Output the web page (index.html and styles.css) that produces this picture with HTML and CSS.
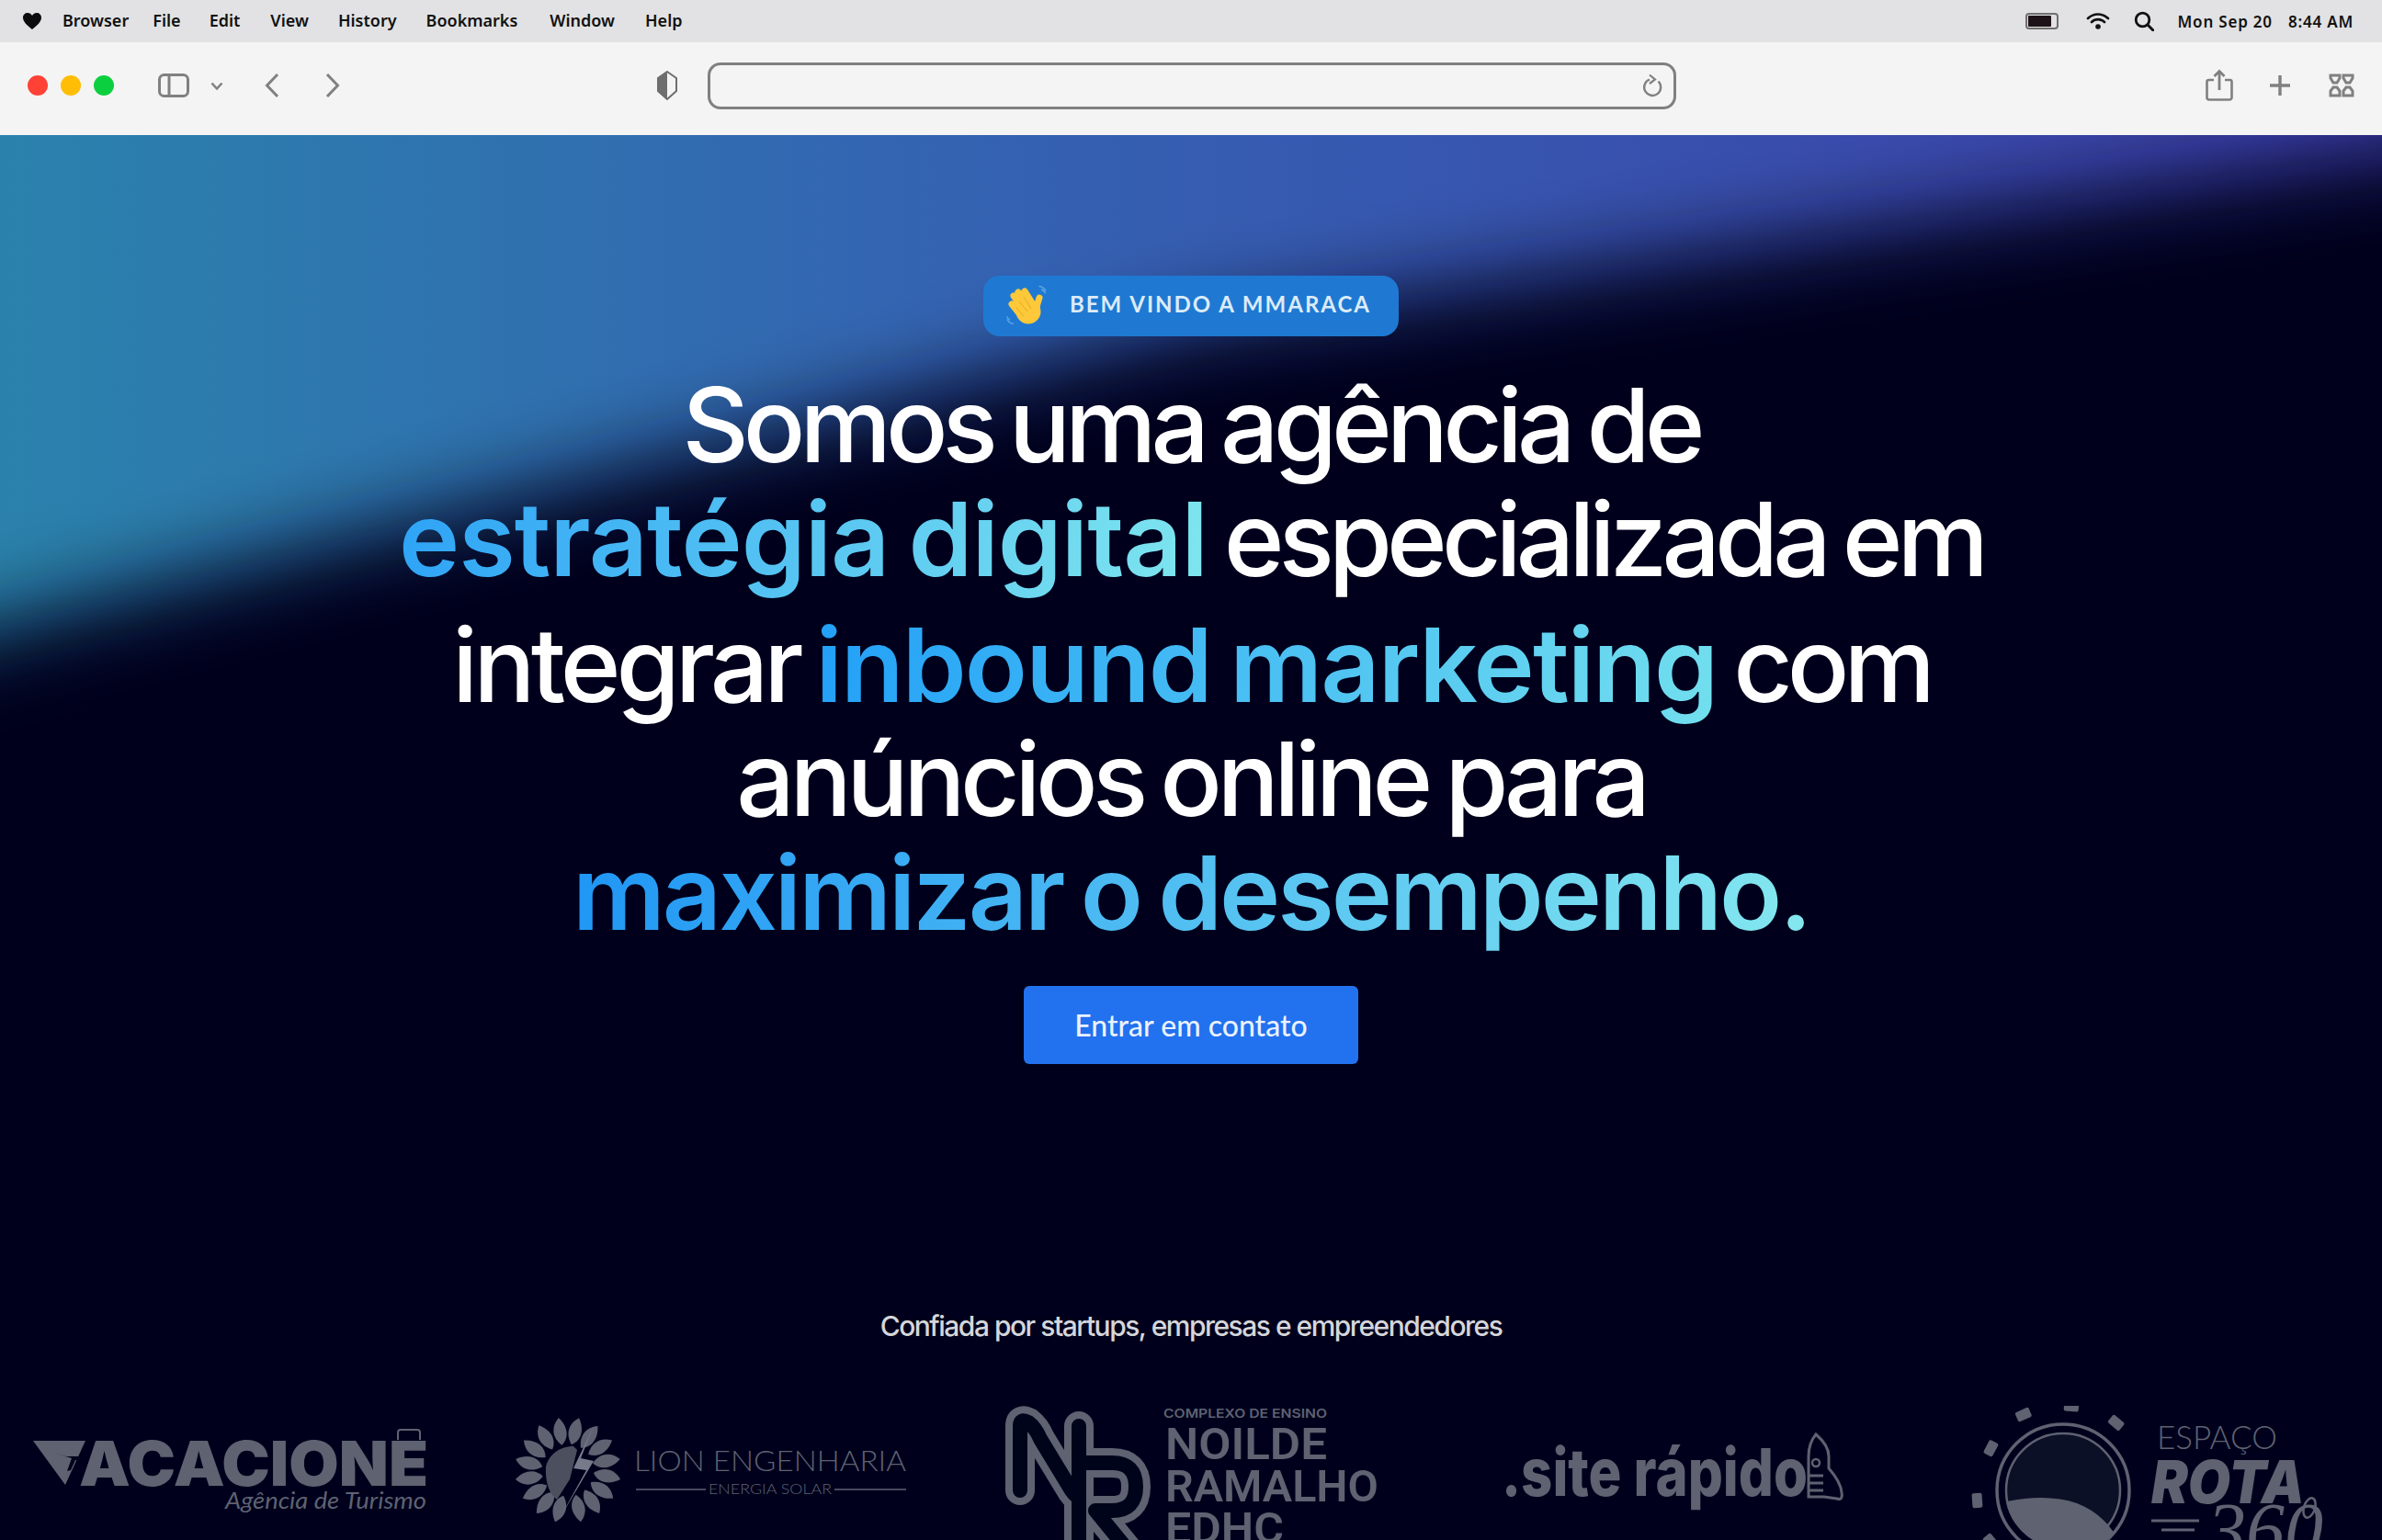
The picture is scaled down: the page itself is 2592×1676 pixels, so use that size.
FILE: index.html
```html
<!DOCTYPE html>
<html lang="pt-BR">
<head>
<meta charset="utf-8">
<title>Mmaraca</title>
<link rel="stylesheet" href="styles.css">
</head>
<body>
<header class="menubar">
  <svg class="apple" viewBox="0 0 22 20" width="22" height="20"><path d="M11 19C5 14 1 10.500 1 6.200 1 3 3.400 1 6 1c2.100 0 3.900 1 5 3 1.100-2 2.900-3 5-3 2.600 0 5 2 5 5.200C21 10.500 17 14 11 19z" fill="#0c0c0c"/></svg>
  <nav class="menus">
    <span class="menu">Browser</span><span class="menu">File</span><span class="menu">Edit</span><span class="menu">View</span><span class="menu">History</span><span class="menu">Bookmarks</span><span class="menu">Window</span><span class="menu">Help</span>
  </nav>
  <div class="status">
    <svg class="st-batt" viewBox="0 0 36 18" width="36" height="18"><rect x="1" y="1" width="34" height="16" rx="3" fill="#e2e2e4" stroke="#6f6f6f" stroke-width="2"/><rect x="3" y="3" width="25" height="12" rx="1" fill="#1c1218"/></svg>
    <svg viewBox="0 0 26 20" width="26" height="20"><path d="M2 7c6.500-6 15.500-6 22 0M6 11c4-3.800 10-3.800 14 0" fill="none" stroke="#111" stroke-width="2.600" stroke-linecap="round"/><circle cx="13" cy="16" r="2.800" fill="#111"/></svg>
    <svg viewBox="0 0 22 22" width="22" height="22"><circle cx="9.500" cy="9.500" r="7.300" fill="none" stroke="#111" stroke-width="2.800"/><path d="M15 15l6 6" stroke="#111" stroke-width="3" stroke-linecap="round"/></svg>
    <span class="clock">Mon Sep 20</span>
    <span class="clock time">8:44 AM</span>
  </div>
</header>

<div class="toolbar">
  <div class="lights"><i class="light red"></i><i class="light yellow"></i><i class="light green"></i></div>
  <svg class="tb-sidebar" viewBox="0 0 34 26" width="34" height="26"><rect x="1.500" y="1.500" width="31" height="23" rx="5" fill="none" stroke="#808080" stroke-width="3"/><path d="M12 2v22" stroke="#808080" stroke-width="3"/></svg>
  <svg class="tb-chev" viewBox="0 0 14 9" width="14" height="9"><path d="M1.500 1.500L7 7.500l5.500-6" fill="none" stroke="#808080" stroke-width="2.500"/></svg>
  <svg class="tb-back" viewBox="0 0 16 28" width="16" height="28"><path d="M14 2L2.500 14 14 26" fill="none" stroke="#808080" stroke-width="3"/></svg>
  <svg class="tb-fwd" viewBox="0 0 16 28" width="16" height="28"><path d="M2 2l11.500 12L2 26" fill="none" stroke="#808080" stroke-width="3"/></svg>
  <svg class="tb-shield" viewBox="0 0 22 32" width="22" height="32"><path d="M11 1L21 8v14L11 31 1 22V8z" fill="#f4f4f4" stroke="#6e6e6e" stroke-width="2"/><path d="M11 1L1 8v14l10 9z" fill="#6e6e6e"/></svg>
  <div class="urlbar">
    <svg viewBox="0 0 22 26" width="22" height="26"><path d="M8 6.500a9 9 0 1 0 9.500 2" fill="none" stroke="#808080" stroke-width="2.400"/><path d="M8 1.500l6 5-6 4.500" fill="none" stroke="#808080" stroke-width="2.200"/></svg>
  </div>
  <div class="tb-right">
    <svg viewBox="0 0 30 36" width="30" height="36"><path d="M9 13H3.500A2 2 0 0 0 1.500 15v17a2.500 2.500 0 0 0 2.500 2.500h22a2.500 2.500 0 0 0 2.500-2.500V15a2 2 0 0 0-2-2H21" fill="none" stroke="#808080" stroke-width="2.600" transform="translate(0 -1)"/><path d="M15 23V3M9.500 8L15 2.500 20.500 8" fill="none" stroke="#808080" stroke-width="2.800"/></svg>
    <svg viewBox="0 0 22 22" width="22" height="22"><path d="M11 0v22M0 11h22" stroke="#808080" stroke-width="3.400"/></svg>
    <svg class="tb-grid" viewBox="0 0 28 26" width="28" height="26"><g fill="none" stroke="#808080" stroke-width="3"><path d="M2 2h10v3L9 10H5L2 5zM16 2h10v3l-3 5h-4l-3-5zM5 15h4l3 4v5H2v-5zM19 15h4l3 4v5H16v-5z"/></g></svg>
  </div>
</div>

<main class="hero">
  <svg class="glow" viewBox="0 0 2592 1529" width="2592" height="1529">
    <defs><filter id="soft" x="-10%" y="-15%" width="120%" height="130%"><feGaussianBlur stdDeviation="46"/></filter></defs>
    <polygon points="-200,585 0,533 1296,208 2592,20 2800,-10 2800,1700 -200,1700" fill="#00041a" filter="url(#soft)"/>
  </svg>
  <div class="badge">
    <svg class="wave" viewBox="0 0 46 46" width="46" height="46">
      <g fill="none" stroke="#fdc83a" stroke-width="7" stroke-linecap="round">
        <path d="M15 31L7 21M18 25L9 12M23 20L14 8M28 18L21 7M33 27L37 14"/>
      </g>
      <circle cx="25" cy="29" r="13.500" fill="#fdc83a"/>
      <path d="M12 25l8 9M15 18l9 11M20 13l8 13" fill="none" stroke="#eaa81e" stroke-width="1"/>
      <path d="M39 5c2.200.7 3.800 2 4.500 4.400M36.500 1.500c3.500.5 6 2.500 7.500 5M5 38c-1.800-.6-2.900-1.800-3.300-3.600M9 42.500c-3-.4-5.600-2-7-5" fill="none" stroke="#59a6e4" stroke-width="1.500"/>
    </svg>
    <span class="badge-text">BEM VINDO A MMARACA</span>
  </div>
  <h1 class="title">
    <span class="line l1">Somos uma agência de</span>
    <span class="line l2"><span class="grad g-a">estratégia digital</span> especializada em</span>
    <span class="line l3"><span class="w-int">integrar</span> <span class="grad g-b">inbound marketing</span> com</span>
    <span class="line l4">anúncios online para</span>
    <span class="line l5"><span class="grad g-c">maximizar o desempenho.</span></span>
  </h1>
  <a class="cta">Entrar em contato</a>
  <p class="trust">Confiada por startups, empresas e empreendedores</p>
  <div class="logos">
    <svg class="logo" viewBox="30 1530 530 146" width="530" height="146">
      <path d="M36 1568h57l-22 48z" fill="#5e6271"/>
      <path d="M72 1585l-14-4 20 6-5 14 4-1 5-11 5 1-1-5z" fill="#00041a"/>
      <text x="86" y="1617" class="lg-vac" textLength="380" lengthAdjust="spacingAndGlyphs">ACACIONE</text>
      <path d="M433 1567v-8q0-3 3-3h18q3 0 3 3v8" fill="none" stroke="#5e6271" stroke-width="2"/>
      <text x="245" y="1642" class="lg-vac-sub" textLength="219" lengthAdjust="spacingAndGlyphs">Agência de Turismo</text>
    </svg>
    <svg class="logo" viewBox="560 1530 530 146" width="530" height="146">
      <defs><path id="leaf" d="M0-58c-10 8-11 20-2 30 9-6 11-18 2-30z" fill="#5e6271"/></defs>
      <g transform="translate(618 1600)">
        <use href="#leaf" transform="rotate(-10)"/><use href="#leaf" transform="rotate(12)"/><use href="#leaf" transform="rotate(34)"/><use href="#leaf" transform="rotate(56)"/><use href="#leaf" transform="rotate(78)"/><use href="#leaf" transform="rotate(100)"/><use href="#leaf" transform="rotate(122)"/><use href="#leaf" transform="rotate(144)"/><use href="#leaf" transform="rotate(166)"/><use href="#leaf" transform="rotate(-166)"/><use href="#leaf" transform="rotate(-144)"/><use href="#leaf" transform="rotate(-122)"/><use href="#leaf" transform="rotate(-100)"/><use href="#leaf" transform="rotate(-78)"/><use href="#leaf" transform="rotate(-56)"/><use href="#leaf" transform="rotate(-33)"/>
      </g>
      <path d="M594 1596c3-12 14-22 30-22l4 4-8 32-14 22c-8-6-13-18-12-36z" fill="#4b4f5e"/>
      <path d="M646 1552l-22 46 14 2-30 54 38-64-14-3z" fill="#767a8a"/>
      <text x="690" y="1601" class="lg-lion" textLength="296" lengthAdjust="spacingAndGlyphs">LION ENGENHARIA</text>
      <path d="M692 1621h76M908 1621h78" stroke="#5e6271" stroke-width="1.500"/>
      <text x="771" y="1626" class="lg-lion-sub" textLength="134" lengthAdjust="spacingAndGlyphs">ENERGIA SOLAR</text>
    </svg>
    <svg class="logo" viewBox="1090 1530 542 146" width="542" height="146">
      <path d="M1110 1622V1552q0-9 9-4 8 6 13 18l34 56q8 12 8 0V1552M1174 1592h36q26 0 26 26t-26 26h-18l36 44M1174 1622v60" fill="none" stroke="#5e6271" stroke-width="32" stroke-linecap="round" stroke-linejoin="round"/>
      <path d="M1110 1622V1552q0-9 9-4 8 6 13 18l34 56q8 12 8 0V1552M1174 1592h36q26 0 26 26t-26 26h-18l36 44M1174 1622v60" fill="none" stroke="#00041a" stroke-width="16" stroke-linecap="round" stroke-linejoin="round"/>
      <text x="1266" y="1543" class="lg-nr-top" textLength="178" lengthAdjust="spacingAndGlyphs">COMPLEXO DE ENSINO</text>
      <text x="1268" y="1588" class="lg-nr" textLength="176" lengthAdjust="spacingAndGlyphs">NOILDE</text>
      <text x="1268" y="1634" class="lg-nr" textLength="232" lengthAdjust="spacingAndGlyphs">RAMALHO</text>
      <text x="1268" y="1680" class="lg-nr" textLength="129" lengthAdjust="spacingAndGlyphs">EDHC</text>
    </svg>
    <svg class="logo" viewBox="1632 1530 508 146" width="508" height="146">
      <text x="1634" y="1628" class="lg-site" textLength="333" lengthAdjust="spacingAndGlyphs">.site rápido</text>
      <path d="M1976 1561c-5 6-8 14-8 24v44h17l14 2c5 2 6-2 5-7-1-10-7-18-14-26v-13c0-9-7-18-14-24zM1968 1606h16M1968 1614h16M1968 1622h16" fill="none" stroke="#5e6271" stroke-width="3"/>
      <circle cx="1976" cy="1592" r="4" fill="none" stroke="#5e6271" stroke-width="2.500"/>
    </svg>
    <svg class="logo" viewBox="2140 1530 452 146" width="452" height="146">
      <g fill="#5e6271">
        <rect x="2246" y="1525" width="16" height="11" rx="2" transform="rotate(4 2254 1530)"/>
        <rect x="2194" y="1534" width="16" height="11" rx="2" transform="rotate(-24 2202 1540)"/>
        <rect x="2295" y="1543" width="16" height="11" rx="2" transform="rotate(40 2303 1548)"/>
        <rect x="2158" y="1571" width="16" height="11" rx="2" transform="rotate(-62 2166 1576)"/>
        <rect x="2146" y="1625" width="11" height="16" rx="2" transform="rotate(-4 2151 1633)"/>
        <rect x="2158" y="1672" width="16" height="11" rx="2" transform="rotate(50 2166 1678)"/>
      </g>
      <circle cx="2245" cy="1622" r="72" fill="none" stroke="#5e6271" stroke-width="3.500"/>
      <circle cx="2245" cy="1622" r="62" fill="#0c1026" stroke="#5e6271" stroke-width="2.500"/>
      <path d="M2184 1634c30-6 55-5 76 2 18 7 32 19 41 33a62 62 0 0 1-55 15 62 62 0 0 1-62-50z" fill="#5e6271"/>
      <text x="2347" y="1577" class="lg-esp" textLength="131" lengthAdjust="spacingAndGlyphs">ESPAÇO</text>
      <text x="2341" y="1636" class="lg-rota" textLength="167" lengthAdjust="spacingAndGlyphs">ROTA</text>
      <path d="M2341 1655h52M2352 1665h36" stroke="#5e6271" stroke-width="3"/>
      <text x="2402" y="1694" class="lg-360">360</text>
      <ellipse cx="2513" cy="1641" rx="6" ry="11" fill="none" stroke="#5e6271" stroke-width="2.500" transform="rotate(18 2513 1641)"/>
    </svg>
  </div>
</main>
</body>
</html>
```
FILE: styles.css
```css
* { box-sizing: border-box; }
html, body { margin: 0; height: 100%; }
body {
  width: 2592px;
  height: 1676px;
  overflow: hidden;
  background: #00041a;
  font-family: "Inter", "Liberation Sans", sans-serif;
  display: flex;
  flex-direction: column;
}

.menubar {
  height: 46px;
  flex: none;
  background: #e2e2e4;
  display: flex;
  align-items: center;
  padding: 0 31px 0 24px;
  color: #111;
}
.apple { margin-right: 22px; }
.menus { display: flex; gap: 31px; padding-bottom: 2px; }
.menu { font: 600 18px "Noto Sans", sans-serif; }
.menu:nth-child(2) { margin-left: -5px; }
.menu:nth-child(4) { margin-left: 2px; }
.menu:nth-child(5) { margin-left: 1px; }
.menu:nth-child(6) { margin-left: 1px; }
.menu:nth-child(7) { margin-left: 4px; }
.menu:nth-child(8) { margin-left: 2px; }
.status { margin-left: auto; display: flex; align-items: center; gap: 26px; }
.st-batt { margin-right: 4px; }
.clock { font: 600 17px "Noto Sans", sans-serif; letter-spacing: .8px; }
.time { margin-left: -9px; }

.toolbar {
  height: 101px;
  flex: none;
  background: #f4f4f4;
  display: flex;
  align-items: center;
  padding: 0 30px 7px;
}
.lights { display: flex; gap: 14px; }
.light { width: 22px; height: 22px; border-radius: 50%; display: block; }
.red { background: #ff4136; }
.yellow { background: #ffbd05; }
.green { background: #0ccf3f; }
.tb-sidebar { margin-left: 48px; }
.tb-chev { margin-left: 23px; }
.tb-back { margin-left: 45px; }
.tb-fwd { margin-left: 50px; }
.tb-shield { margin-left: 345px; }
.urlbar {
  width: 1054px;
  height: 51px;
  margin-left: 33px;
  border: 3px solid #808080;
  border-radius: 14px;
  display: flex;
  align-items: center;
  justify-content: flex-end;
  padding-right: 12px;
}
.tb-right { margin-left: auto; display: flex; align-items: center; gap: 40px; }
.tb-grid { margin-left: 2px; }

.hero {
  flex: 1;
  position: relative;
  overflow: hidden;
  display: flex;
  flex-direction: column;
  align-items: center;
  padding-top: 153px;
  background: linear-gradient(90deg, #2a82ac 0%, #3463b2 40%, #3c3eaa 100%);
}
.glow { position: absolute; left: 0; top: 0; display: block; }
.badge, .title, .cta, .trust, .logos { position: relative; }

.badge {
  width: 452px;
  height: 67px;
  border-radius: 18px;
  background: #1f79d2;
  display: flex;
  align-items: center;
  padding: 0 0 0 24px;
  gap: 24px;
}
.badge-text {
  font: 700 24px "Lato", sans-serif;
  letter-spacing: 2px;
  color: #dcebf8;
  margin-bottom: 5px;
}

.title { margin: 34px 0 0; color: #fff; font-weight: 500; font-size: 112px; letter-spacing: -6px; word-spacing: -6px; text-align: center; }
.line { display: block; line-height: 124px; white-space: nowrap; }
.l3 { margin-top: 13px; }
.l4 { letter-spacing: -5.5px; }
.w-int { letter-spacing: -5px; }
.grad { -webkit-background-clip: text; background-clip: text; color: transparent; font-weight: 600; }
.g-a { background-image: linear-gradient(100deg, #2ea3f6, #7fe6ee); letter-spacing: -1px; }
.g-b { background-image: linear-gradient(100deg, #22a0f7, #72dfee); letter-spacing: -1.8px; }
.g-c { background-image: linear-gradient(100deg, #1f96f5, #85e8ef); letter-spacing: -3px; }

.cta {
  width: 364px;
  height: 86px;
  margin-top: 40px;
  border-radius: 6px;
  background: #2271ee;
  color: #eaf2ff;
  font: 500 32px "Lato", sans-serif;
  display: flex;
  align-items: center;
  justify-content: center;
}
.trust {
  margin: 267px 0 0;
  font-size: 30px;
  font-weight: 500;
  letter-spacing: -1.5px;
  color: #d5d6da;
}
.logos {
  margin-top: 69px;
  align-self: stretch;
  padding-left: 30px;
  display: flex;
}
.logo { flex: none; display: block; }
.logo text { fill: #5e6271; }
.lg-vac { font: 900 68px "Inter", sans-serif; }
.lg-vac-sub { font: italic 400 25px "Lato", sans-serif; }
.lg-lion { font: 300 31px "Lato", sans-serif; }
.lg-lion-sub { font: 300 15px "Lato", sans-serif; }
.lg-nr-top { font: 600 13px "Inter", sans-serif; }
.lg-nr { font: 600 48px "Roboto", sans-serif; }
.lg-site { font: 800 72px "Inter", sans-serif; }
.lg-esp { font: 300 36px "Lato", sans-serif; }
.lg-rota { font: italic 900 64px "Inter", sans-serif; }
.lg-360 { font: italic 400 84px "Liberation Serif", serif; }
```
